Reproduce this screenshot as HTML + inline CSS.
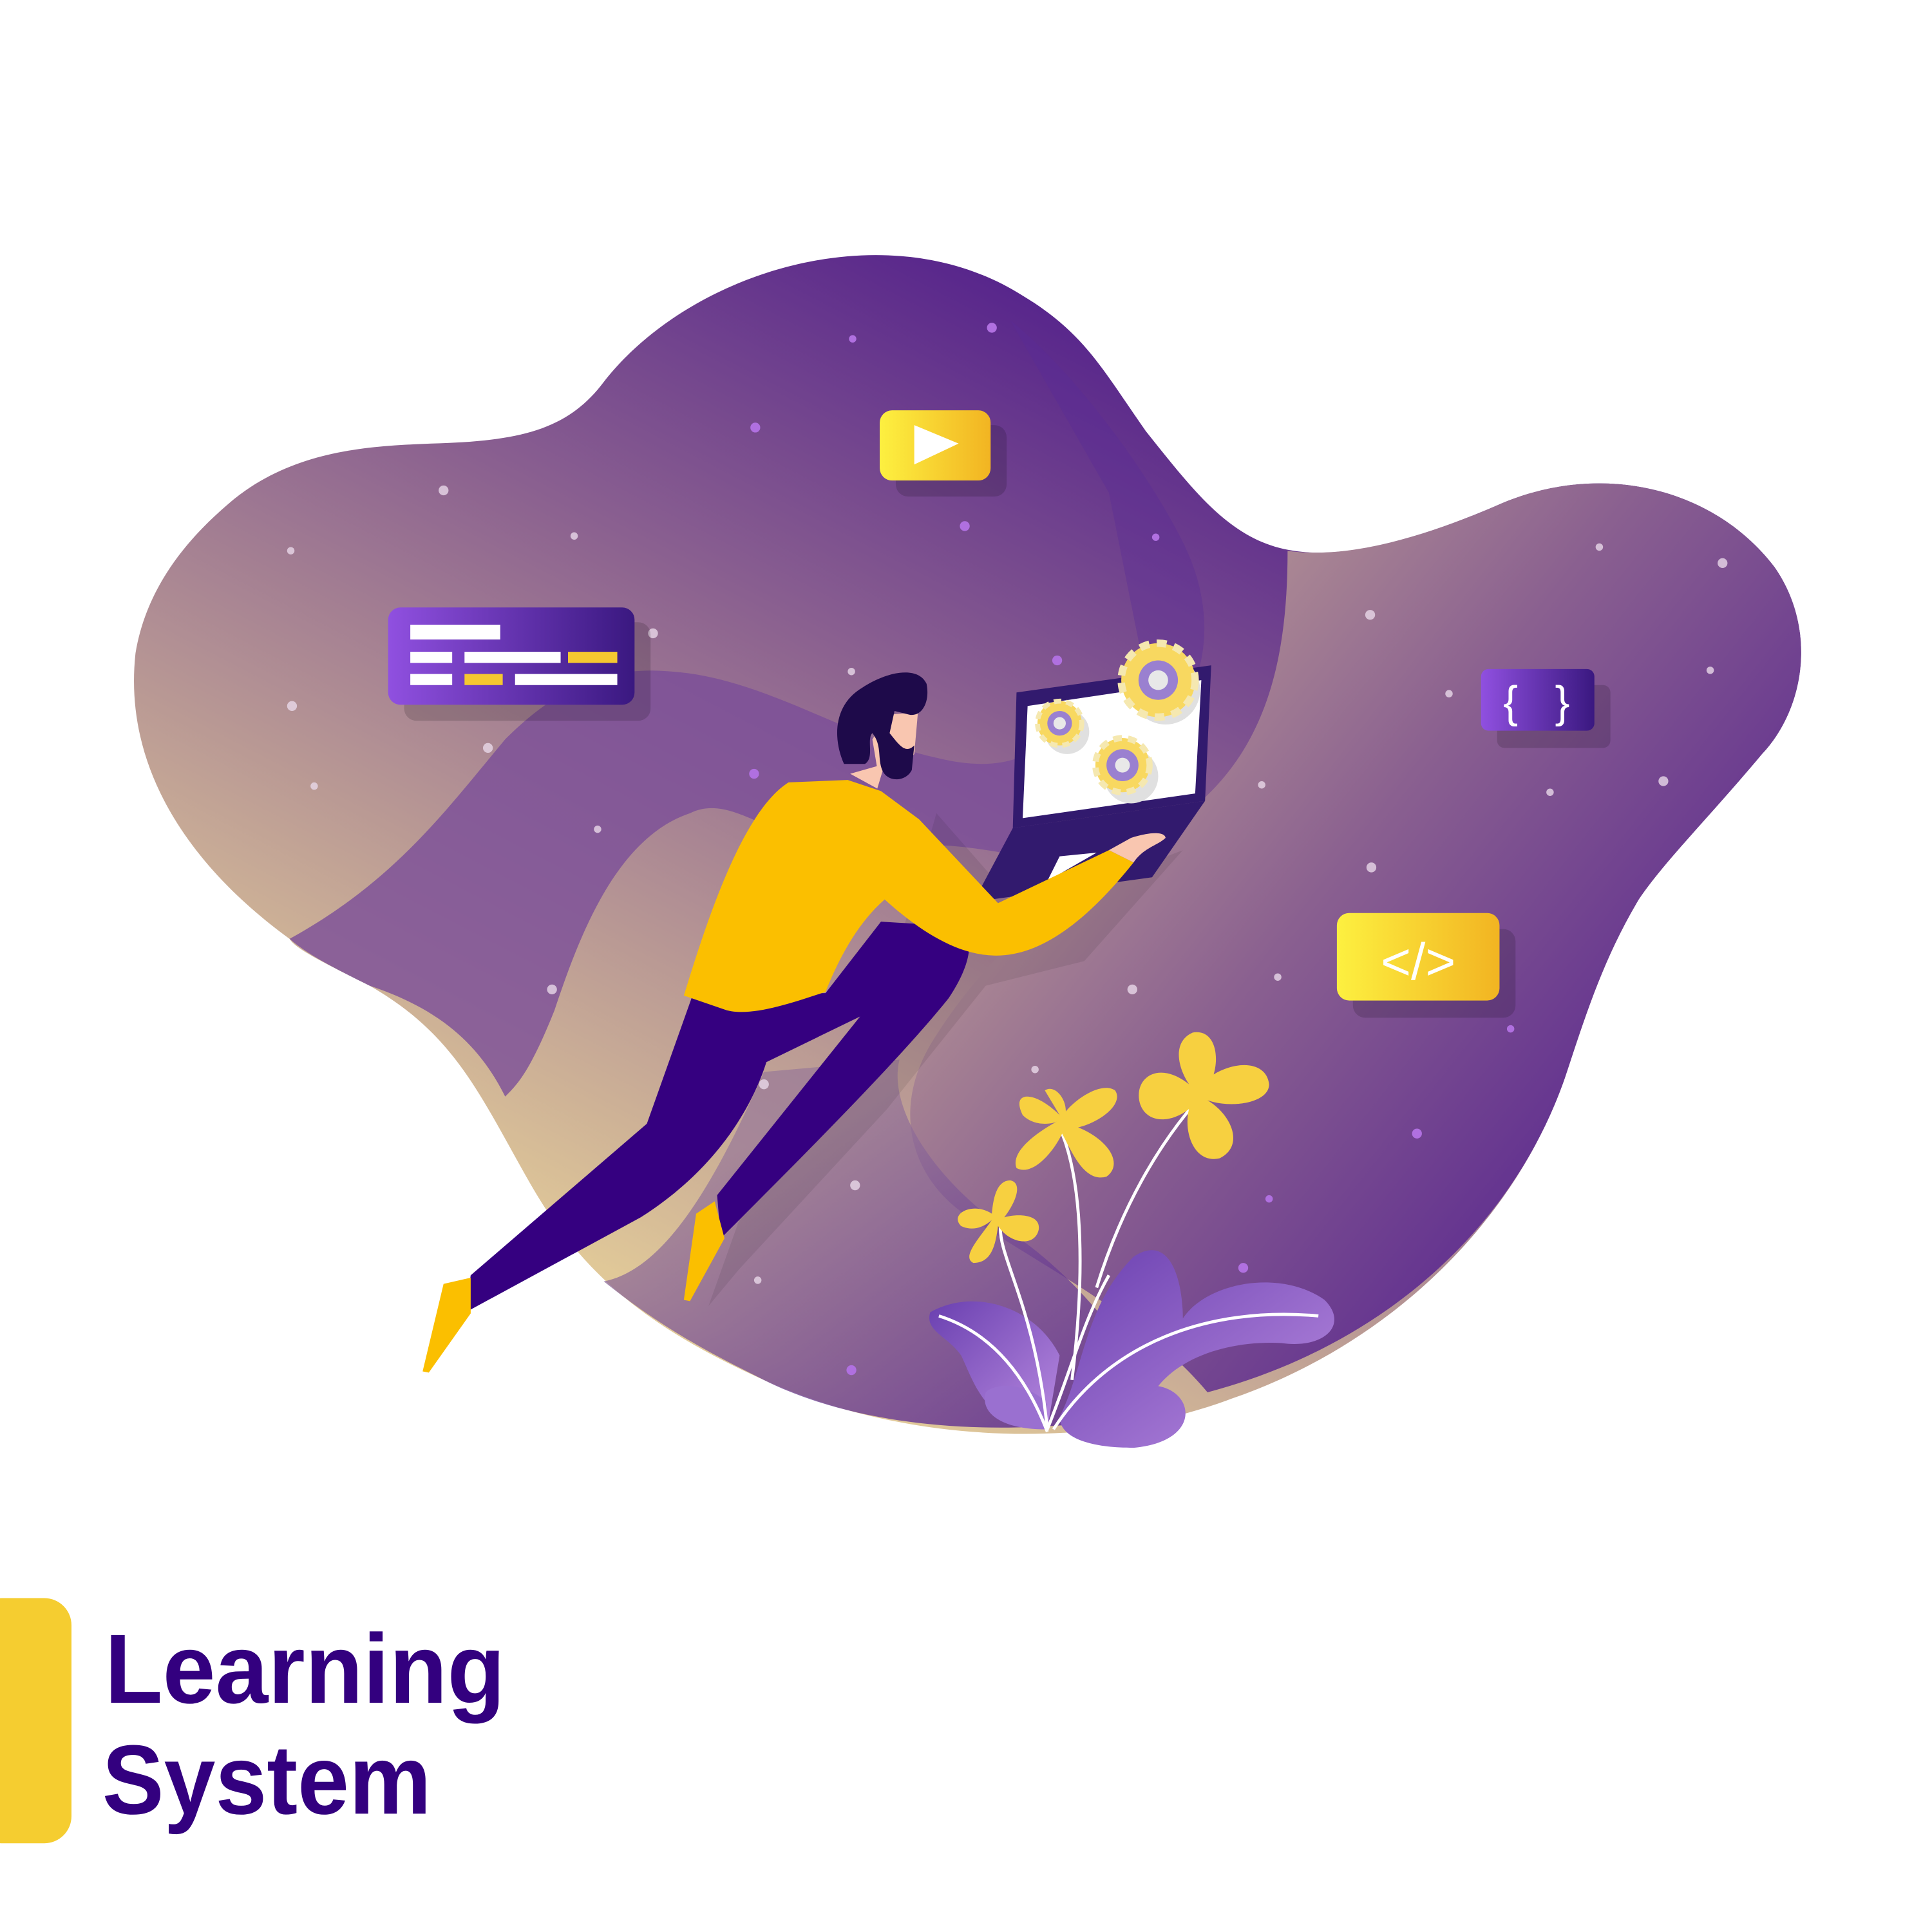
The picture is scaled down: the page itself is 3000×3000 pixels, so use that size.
<!DOCTYPE html>
<html><head><meta charset="utf-8"><style>html,body{margin:0;padding:0;background:#fff}svg{display:block}</style></head>
<body>
<svg width="3000" height="3000" viewBox="0 0 1568 1568" xmlns="http://www.w3.org/2000/svg">
<defs>
<linearGradient id="bg" x1="0.75" y1="0.05" x2="0.2" y2="0.8">
<stop offset="0" stop-color="#45108a"/><stop offset="0.45" stop-color="#8a6090"/><stop offset="1" stop-color="#e0c898"/>
</linearGradient>
<linearGradient id="bg2" x1="0.9" y1="1" x2="0.3" y2="0.2">
<stop offset="0" stop-color="#4a1590"/><stop offset="1" stop-color="#9a7a98"/>
</linearGradient>
<linearGradient id="rb" x1="1" y1="0.8" x2="0" y2="0">
<stop offset="0" stop-color="#4a1590"/><stop offset="0.5" stop-color="#8a6090"/><stop offset="1" stop-color="#d8bf98"/>
</linearGradient>
<linearGradient id="pc" x1="0" y1="0" x2="1" y2="0"><stop offset="0" stop-color="#9050e0"/><stop offset="1" stop-color="#3a1880"/></linearGradient>
<linearGradient id="yc" x1="0" y1="0" x2="1" y2="0"><stop offset="0" stop-color="#fdf040"/><stop offset="1" stop-color="#f2b422"/></linearGradient>
<linearGradient id="lf" x1="0" y1="0" x2="1" y2="1"><stop offset="0" stop-color="#6a40b0"/><stop offset="1" stop-color="#b88ae0"/></linearGradient>
</defs>
<path d="M490,310 C560,220 720,170 830,240 C880,270 895,300 930,350 C970,400 1000,440 1050,447 C1100,455 1170,430 1220,408 C1300,375 1390,395 1440,460 C1475,510 1465,575 1430,612 C1390,660 1350,700 1330,730 C1300,780 1285,830 1270,875 C1230,990 1130,1090 1000,1135 C880,1180 730,1170 620,1120 C520,1075 470,1030 430,960 C390,890 370,840 300,800 C260,780 240,770 235,762 C150,700 100,620 110,530 C120,470 160,430 190,405 C240,365 300,362 350,360 C420,358 460,350 490,310 Z" fill="url(#bg)"/>
<path d="M1045,447 C1045,530 1030,600 975,650 C920,700 830,730 760,840 C720,900 740,960 790,990 C850,1030 930,1070 980,1130 C1130,1090 1230,990 1270,875 C1285,830 1300,780 1330,730 C1350,700 1390,660 1430,612 C1465,575 1475,510 1440,460 C1390,395 1300,375 1220,408 C1170,430 1100,455 1045,447 Z" fill="url(#rb)"/>
<path d="M235,762 C320,715 360,660 410,600 C450,560 490,540 545,545 C620,550 690,600 760,615 C800,625 830,620 850,600 L860,700 C800,690 760,680 720,690 C640,700 600,640 560,660 C500,680 470,760 450,820 C430,870 420,880 410,890 C390,850 360,820 300,800 C270,785 250,775 235,762 Z" fill="#7a4e98" opacity="0.8"/>
<path d="M620,1120 C700,1160 820,1170 950,1145 C920,1100 880,1040 820,1000 C760,960 720,900 730,860 L620,870 C580,960 540,1030 490,1040 C540,1080 580,1100 620,1120 Z" fill="url(#bg2)" opacity="0.75"/>
<path d="M820,260 C870,300 930,380 960,440 C990,500 980,560 940,600 L900,400 Z" fill="#5a2a98" opacity="0.35"/>
<g fill="#e8d8e8" opacity="0.8">
<circle cx="360" cy="398" r="4"/><circle cx="236" cy="447" r="3"/><circle cx="466" cy="435" r="3"/><circle cx="237" cy="573" r="4"/><circle cx="255" cy="638" r="3"/><circle cx="396" cy="607" r="4"/><circle cx="485" cy="673" r="3"/><circle cx="448" cy="803" r="4"/><circle cx="530" cy="514" r="4"/><circle cx="1112" cy="499" r="4"/><circle cx="1176" cy="563" r="3"/><circle cx="1298" cy="444" r="3"/><circle cx="1398" cy="457" r="4"/><circle cx="1388" cy="544" r="3"/><circle cx="1258" cy="643" r="3"/><circle cx="1350" cy="634" r="4"/><circle cx="1113" cy="704" r="4"/><circle cx="1024" cy="637" r="3"/><circle cx="919" cy="803" r="4"/><circle cx="1037" cy="793" r="3"/><circle cx="840" cy="868" r="3"/><circle cx="694" cy="962" r="4"/><circle cx="615" cy="1039" r="3"/><circle cx="691" cy="545" r="3"/><circle cx="620" cy="880" r="4"/>
</g>
<g fill="#b070e0"><circle cx="805" cy="266" r="4"/><circle cx="692" cy="275" r="3"/><circle cx="613" cy="347" r="4"/><circle cx="783" cy="427" r="4"/><circle cx="938" cy="436" r="3"/><circle cx="858" cy="536" r="4"/><circle cx="612" cy="628" r="4"/><circle cx="1226" cy="835" r="3"/><circle cx="1150" cy="920" r="4"/><circle cx="1030" cy="973" r="3"/><circle cx="1009" cy="1029" r="4"/><circle cx="691" cy="1112" r="4"/></g>
<rect x="328" y="505" width="200" height="80" rx="10" fill="#000" opacity="0.15"/>
<rect x="315" y="493" width="200" height="79" rx="10" fill="url(#pc)"/>
<g fill="#fff"><rect x="333" y="507" width="73" height="12"/><rect x="333" y="529" width="34" height="9"/><rect x="377" y="529" width="78" height="9"/><rect x="333" y="547" width="34" height="9"/><rect x="418" y="547" width="83" height="9"/></g>
<g fill="#f5c830"><rect x="461" y="529" width="40" height="9"/><rect x="377" y="547" width="31" height="9"/></g>
<rect x="727" y="345" width="90" height="58" rx="10" fill="#000" opacity="0.15"/>
<rect x="714" y="333" width="90" height="57" rx="10" fill="url(#yc)"/>
<path d="M742,345 L778,360 L742,377 Z" fill="#fff"/>
<rect x="1215" y="556" width="92" height="51" rx="6" fill="#000" opacity="0.15"/>
<rect x="1202" y="543" width="92" height="50" rx="6" fill="url(#pc)"/>
<text x="1220" y="582" font-family="Liberation Sans, sans-serif" font-size="36" fill="#fff">{</text>
<text x="1262" y="582" font-family="Liberation Sans, sans-serif" font-size="36" fill="#fff">}</text>
<rect x="1098" y="754" width="132" height="72" rx="10" fill="#000" opacity="0.15"/>
<rect x="1085" y="741" width="132" height="71" rx="10" fill="url(#yc)"/>
<text x="1151" y="795" text-anchor="middle" font-family="Liberation Sans, sans-serif" font-size="42" fill="#fff">&lt;/&gt;</text>
<path d="M760,660 L830,740 L960,690 L880,780 L800,800 L720,900 L600,1030 L575,1060 L600,990 L700,870 Z" fill="#000" opacity="0.08"/>
<path d="M825,562 L983,540 L978,650 L822,672 Z" fill="#321a6e"/>
<path d="M834,573 L975,552 L970,644 L830,664 Z" fill="#fff"/>
<path d="M822,672 L978,650 L935,712 L790,732 Z" fill="#321a6e"/>
<path d="M860,695 L890,692 L850,715 Z" fill="#fff"/>
<g>
<circle cx="946" cy="560" r="28" fill="#e0e0e0"/>
<circle cx="940" cy="552" r="30" fill="#f8d860" stroke="#f5e8b0" stroke-width="6" stroke-dasharray="8 6"/>
<circle cx="940" cy="552" r="16" fill="#9a80d0"/><circle cx="940" cy="552" r="8" fill="#e8e8e8"/>
<circle cx="866" cy="594" r="18" fill="#e0e0e0"/>
<circle cx="860" cy="587" r="18" fill="#f8d860" stroke="#f5e8b0" stroke-width="4" stroke-dasharray="6 4"/>
<circle cx="860" cy="587" r="10" fill="#9a80d0"/><circle cx="860" cy="587" r="5" fill="#e8e8e8"/>
<circle cx="918" cy="630" r="22" fill="#e0e0e0"/>
<circle cx="911" cy="621" r="22" fill="#f8d860" stroke="#f5e8b0" stroke-width="5" stroke-dasharray="7 5"/>
<circle cx="911" cy="621" r="13" fill="#9a80d0"/><circle cx="911" cy="621" r="6" fill="#e8e8e8"/>
</g>
<path d="M562,808 L525,912 L382,1035 L378,1065 L520,988 C580,950 610,900 622,862 L698,825 L582,970 L585,1005 C650,940 730,860 770,810 C790,780 790,760 780,752 L715,748 L670,806 Z" fill="#350080"/>
<path d="M382,1037 L360,1042 L343,1113 L348,1114 L382,1066 Z" fill="#fbbf00"/>
<path d="M580,975 L565,985 L555,1055 L560,1056 L588,1005 Z" fill="#fbbf00"/>
<path d="M640,635 L688,633 L715,642 L746,665 L810,733 L900,690 L920,700 C880,750 840,780 800,775 C770,772 740,750 718,730 C695,750 680,780 670,805 C640,815 610,825 590,820 L555,808 C570,760 600,660 640,635 Z" fill="#fbbf00"/>
<path d="M900,690 L918,680 C930,676 945,674 946,680 C940,686 928,688 920,700 Z" fill="#f9c6b0"/>
<path d="M690,628 L712,640 L718,620 Z" fill="#f9c6b0"/>
<path d="M722,580 L745,578 L742,612 L728,630 L712,624 L708,600 Z" fill="#f9c6b0"/>
<path d="M700,558 C720,545 745,540 752,555 C755,570 748,582 738,580 L726,577 L722,595 C730,605 735,612 742,605 L740,625 C735,635 720,635 716,625 C712,615 716,605 708,595 C703,600 710,615 702,620 L685,620 C676,600 676,572 700,558 Z" fill="#1e0a4a"/>
<path d="M755,1065 C790,1045 840,1060 860,1100 L850,1160 C800,1160 790,1120 780,1100 C770,1085 750,1080 755,1065 Z" fill="url(#lf)"/>
<path d="M860,1150 C880,1110 880,1060 920,1020 C950,1000 960,1040 960,1070 C980,1040 1040,1030 1075,1055 C1095,1075 1075,1095 1040,1090 C1000,1088 960,1100 940,1125 C970,1130 975,1170 920,1175 C880,1175 860,1165 860,1150 Z" fill="url(#lf)"/>
<path d="M800,1130 C810,1120 840,1125 850,1140 L848,1160 C815,1160 795,1148 800,1130 Z" fill="#9a70d0"/>
<g stroke="#fff" stroke-width="2.5" fill="none">
<path d="M850,1162 C830,1110 800,1080 762,1068"/>
<path d="M855,1160 C900,1090 980,1060 1070,1068"/>
<path d="M850,1160 C870,1110 880,1070 900,1035"/>
<path d="M850,1160 C840,1060 810,1020 812,995"/>
<path d="M870,1120 C880,1040 880,960 860,915"/>
<path d="M890,1045 C910,980 940,930 970,895"/>
</g>
<g fill="#f7d040">
<path d="M805,985 C790,975 770,985 780,995 C790,1000 800,995 805,990 C795,1005 780,1020 790,1025 C805,1025 808,1010 810,995 C820,1010 840,1012 843,998 C845,985 825,985 815,988 C825,975 830,960 820,958 C808,958 806,975 805,985 Z"/>
<path d="M860,905 C840,885 820,885 830,905 C840,915 855,912 858,910 C840,920 820,935 825,948 C838,955 855,935 862,920 C870,935 880,960 898,955 C912,945 900,925 875,915 C895,910 912,895 905,885 C895,878 875,890 865,902 C865,890 855,880 848,885 Z"/>
<path d="M965,880 C940,860 920,875 925,895 C930,912 950,912 965,900 C960,920 970,945 990,940 C1010,930 1000,905 980,893 C1000,900 1030,895 1030,880 C1028,862 1005,860 985,872 C990,855 985,835 968,838 C952,845 955,865 965,880 Z"/>
</g>
<rect x="-20" y="1297" width="78" height="199" rx="22" fill="#f5cd30"/>
<text x="85" y="1382" font-family="Liberation Sans, sans-serif" font-weight="bold" font-size="80" fill="#33007f" textLength="325" lengthAdjust="spacingAndGlyphs">Learning</text>
<text x="83" y="1472" font-family="Liberation Sans, sans-serif" font-weight="bold" font-size="80" fill="#33007f" textLength="267" lengthAdjust="spacingAndGlyphs">System</text>
</svg>
</body></html>
